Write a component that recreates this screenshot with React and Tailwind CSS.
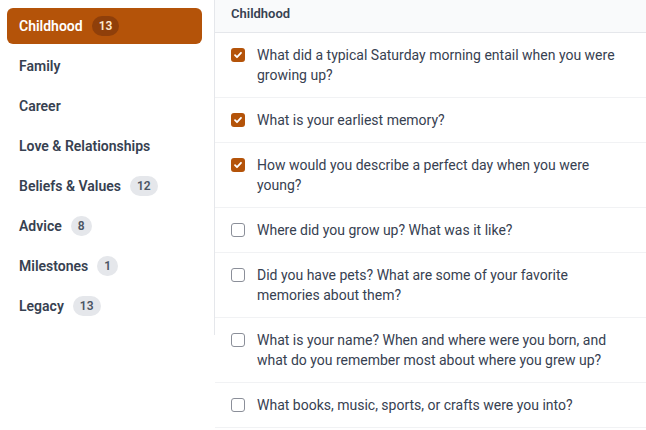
import React, { useState } from "react";

const categories = [
  { name: "Childhood", count: 13 },
  { name: "Family" },
  { name: "Career" },
  { name: "Love & Relationships" },
  { name: "Beliefs & Values", count: 12 },
  { name: "Advice", count: 8 },
  { name: "Milestones", count: 1 },
  { name: "Legacy", count: 13 },
];

const initialQuestions = [
  { text: "What did a typical Saturday morning entail when you were growing up?", done: true },
  { text: "What is your earliest memory?", done: true },
  { text: "How would you describe a perfect day when you were young?", done: true },
  { text: "Where did you grow up? What was it like?", done: false },
  { text: "Did you have pets? What are some of your favorite memories about them?", done: false },
  { text: "What is your name? When and where were you born, and what do you remember most about where you grew up?", done: false },
  { text: "What books, music, sports, or crafts were you into?", done: false },
];

function Checkbox({ checked, onClick }) {
  return (
    <button
      onClick={onClick}
      className={
        checked
          ? "mt-[3px] flex h-[14px] w-[14px] shrink-0 items-center justify-center rounded-[3px] bg-[#b45309]"
          : "mt-[3px] flex h-[14px] w-[14px] shrink-0 items-center justify-center rounded-[3px] border border-[#8b8f99] bg-white"
      }
    >
      {checked && (
        <svg width="10" height="10" viewBox="0 0 10 10" fill="none">
          <path d="M2 5.2l2 2 4-4.4" stroke="white" strokeWidth="1.8" strokeLinecap="round" strokeLinejoin="round" />
        </svg>
      )}
    </button>
  );
}

export default function App() {
  const [active, setActive] = useState("Childhood");
  const [questions, setQuestions] = useState(initialQuestions);

  const toggle = (i) => {
    setQuestions(questions.map((q, j) => (j === i ? { ...q, done: !q.done } : q)));
  };

  return (
    <div className="flex min-h-screen items-start bg-white font-['Roboto',sans-serif] text-[#374151]">
      <aside className="flex w-[215px] shrink-0 flex-col gap-1 border-r border-[#e5e7eb] pb-[11px] pl-[7px] pr-3 pt-2">
        {categories.map((c) => {
          const isActive = c.name === active;
          return (
            <button
              key={c.name}
              onClick={() => setActive(c.name)}
              className={
                isActive
                  ? "flex h-9 items-center gap-[9px] rounded-md bg-[#b45309] px-3 text-left text-[14px] font-semibold text-white"
                  : "flex h-9 items-center gap-[9px] rounded-md px-3 text-left text-[14px] font-semibold text-[#374151]"
              }
            >
              <span>{c.name}</span>
              {c.count && (
                <span
                  className={
                    isActive
                      ? "flex h-5 items-center rounded-full bg-[#8f3f0a] px-[7px] text-[12px] font-semibold text-[#fde9cf]"
                      : "flex h-5 items-center rounded-full bg-[#e5e7eb] px-[7px] text-[12px] font-semibold text-[#4b5563]"
                  }
                >
                  {c.count}
                </span>
              )}
            </button>
          );
        })}
      </aside>
      <main className="flex-1">
        <div className="flex h-[33px] items-center border-b border-[#e5e7eb] bg-[#f9fafb] px-4 pb-1 text-[13px] font-semibold text-[#374151]">
          {active}
        </div>
        {questions.map((q, i) => (
          <div key={i} className="flex gap-3 border-b border-[#f1f2f4] px-4 py-3">
            <Checkbox checked={q.done} onClick={() => toggle(i)} />
            <p className="text-[14px] leading-5 text-[#374151]">{q.text}</p>
          </div>
        ))}
      </main>
    </div>
  );
}
